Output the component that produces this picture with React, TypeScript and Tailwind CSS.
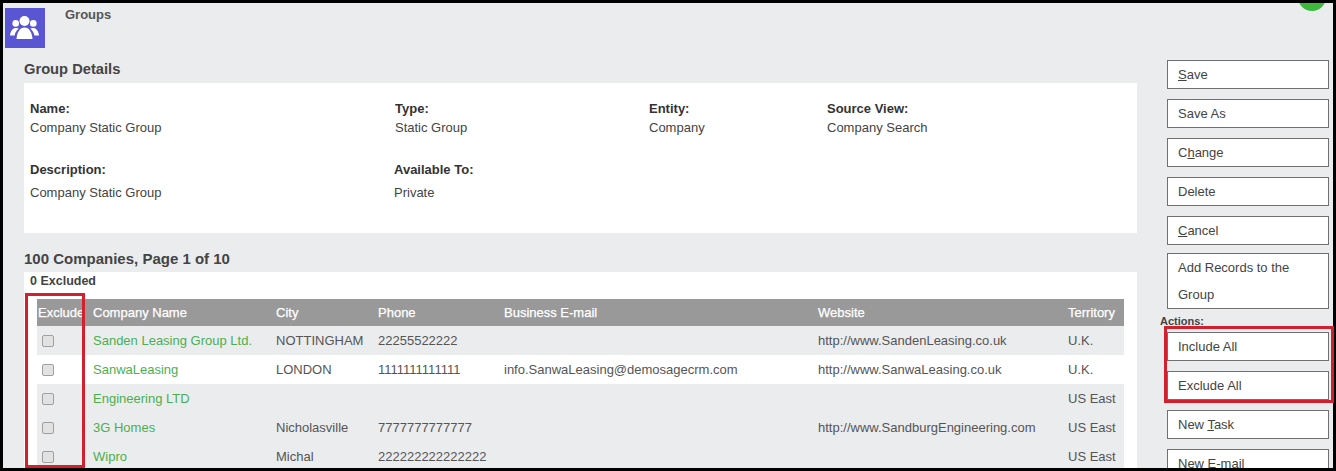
type Row = { name: string; city: string; phone: string; email: string; web: string; territory: string; white?: boolean };

const rows: Row[] = [
  { name: "Sanden Leasing Group Ltd.", city: "NOTTINGHAM", phone: "22255522222", email: "", web: "http://www.SandenLeasing.co.uk", territory: "U.K." },
  { name: "SanwaLeasing", city: "LONDON", phone: "1111111111111", email: "info.SanwaLeasing@demosagecrm.com", web: "http://www.SanwaLeasing.co.uk", territory: "U.K.", white: true },
  { name: "Engineering LTD", city: "", phone: "", email: "", web: "", territory: "US East" },
  { name: "3G Homes", city: "Nicholasville", phone: "7777777777777", email: "", web: "http://www.SandburgEngineering.com", territory: "US East" },
  { name: "Wipro", city: "Michal", phone: "222222222222222", email: "", web: "", territory: "US East" },
];

function Field({ label, value, width, gap = "mt-[1px]" }: { label: string; value: string; width: string; gap?: string }) {
  return (
    <div className={width}>
      <div className="font-bold text-[#333] leading-[18px]">{label}</div>
      <div className={`leading-[18px] text-[#444] ${gap}`}>{value}</div>
    </div>
  );
}

function ActionButton({ children, className = "h-[29px] leading-[28px]" }: { children: React.ReactNode; className?: string }) {
  return (
    <div className={`w-[162px] border border-[#707070] bg-white px-[10px] text-[#444] shrink-0 ${className}`}>
      {children}
    </div>
  );
}

function GroupsIcon() {
  return (
    <svg viewBox="0 0 40 40" className="w-[40px] h-[40px]" fill="#ffffff">
      <circle cx="19.5" cy="13" r="5" />
      <circle cx="10.7" cy="15.4" r="3.3" />
      <circle cx="28.3" cy="15.4" r="3.3" />
      <path d="M11.5 31 C12 24 15 19.5 19.5 19.5 C24 19.5 27 24 27.5 31 Z" />
      <path d="M5 27.5 C5.5 22.5 8 20 11 20 L13.8 20.6 C11.5 22.5 10 25 9.6 27.5 Z" />
      <path d="M34 27.5 C33.5 22.5 31 20 28 20 L25.2 20.6 C27.5 22.5 29 25 29.4 27.5 Z" />
    </svg>
  );
}

export default function App() {
  return (
    <div
      className="relative w-[1336px] h-[471px] bg-[#ebecee] border-t-[3px] border-l-[3px] border-r-[3px] border-b-[3px] border-black text-[13px]"
      style={{ fontFamily: '"Liberation Sans", Arial, sans-serif' }}
    >
      <div className="relative flex h-full overflow-hidden">
        {/* Main column */}
        <div className="w-[1134px] shrink-0">
          <div className="flex h-[45px] pt-[5px]">
            <div className="ml-[2px] w-[40px] h-[40px] bg-[#5a55d2]">
              <GroupsIcon />
            </div>
            <div className="ml-[20px] -mt-[1px] font-bold text-[#555] leading-[16px]">Groups</div>
          </div>

          <div className="ml-[21px] mt-[12px] text-[14.7px] font-bold text-[#444] leading-[18px]">Group Details</div>
          <div className="ml-[21px] mt-[5px] w-[1113px] h-[150px] bg-white pl-[6px] pt-[17px]">
            <div className="flex">
              <Field width="w-[365px]" label="Name:" value="Company Static Group" />
              <Field width="w-[254px]" label="Type:" value="Static Group" />
              <Field width="w-[178px]" label="Entity:" value="Company" />
              <Field width="w-[200px]" label="Source View:" value="Company Search" />
            </div>
            <div className="flex mt-[24px]">
              <Field width="w-[364px]" gap="mt-[5px]" label="Description:" value="Company Static Group" />
              <Field width="w-[254px]" gap="mt-[5px]" label="Available To:" value="Private" />
            </div>
          </div>

          <div className="ml-[21px] mt-[17px] text-[15px] font-bold text-[#444] leading-[18px]">100 Companies, Page 1 of 10</div>
          <div className="ml-[21px] mt-[4px] w-[1113px] bg-white px-[13px] h-[200px]">
            <div className="-ml-[7px] pt-[1px] text-[12.5px] font-bold text-[#444] leading-[17px]">0 Excluded</div>
            <div className="mt-[9px] grid grid-cols-[56px_183px_102px_126px_314px_250px_56px] h-[27px] items-center bg-[#999999] text-white [-webkit-text-stroke:0.25px_#ffffff]">
              <div className="pl-[1px]">Exclude</div>
              <div>Company Name</div>
              <div>City</div>
              <div>Phone</div>
              <div>Business E-mail</div>
              <div>Website</div>
              <div>Territory</div>
            </div>
            {rows.map((row) => (
              <div
                key={row.name}
                className={`grid grid-cols-[56px_183px_102px_126px_314px_250px_56px] h-[29px] items-center text-[#555] ${row.white ? "bg-white" : "bg-[#ebecee]"}`}
              >
                <div className="pl-[5px] flex">
                  <div className="w-[12px] h-[12px] rounded-[2px] border border-[#a0a0a0] bg-[#e2e2e2]" />
                </div>
                <div className="text-[#4caf50] whitespace-nowrap">{row.name}</div>
                <div>{row.city}</div>
                <div>{row.phone}</div>
                <div>{row.email}</div>
                <div>{row.web}</div>
                <div>{row.territory}</div>
              </div>
            ))}
          </div>
        </div>

        {/* Right actions */}
        <div className="ml-[30px] pt-[57px] flex flex-col gap-[10px]">
          <ActionButton><u>S</u>ave</ActionButton>
          <ActionButton>Save As</ActionButton>
          <ActionButton>C<u>h</u>ange</ActionButton>
          <ActionButton>Delete</ActionButton>
          <ActionButton><u>C</u>ancel</ActionButton>
          <ActionButton className="-mt-[2px] h-[56px] leading-[27px]">Add Records to the Group</ActionButton>
          <div className="-mt-[5px] -mb-[6px] -ml-[7px] h-[14px] leading-[14px] text-[11px] font-bold text-[#444]">Actions:</div>
          <ActionButton>Include All</ActionButton>
          <ActionButton>Exclude All</ActionButton>
          <ActionButton>New <u>T</u>ask</ActionButton>
          <ActionButton>New E-mail</ActionButton>
        </div>

        {/* Status dot, cut off by the top edge */}
        <div className="absolute left-[1295px] -top-[20px] w-[28px] h-[28px] rounded-full bg-[#3cb83c]" />
      </div>

      {/* Red annotation boxes */}
      <div className="absolute left-[22px] top-[290px] w-[60px] h-[175px] border-[3px] border-[#d2202e]" />
      <div className="absolute left-[1161px] top-[323px] w-[170px] h-[77px] border-[3px] border-[#d2202e]" />
    </div>
  );
}
